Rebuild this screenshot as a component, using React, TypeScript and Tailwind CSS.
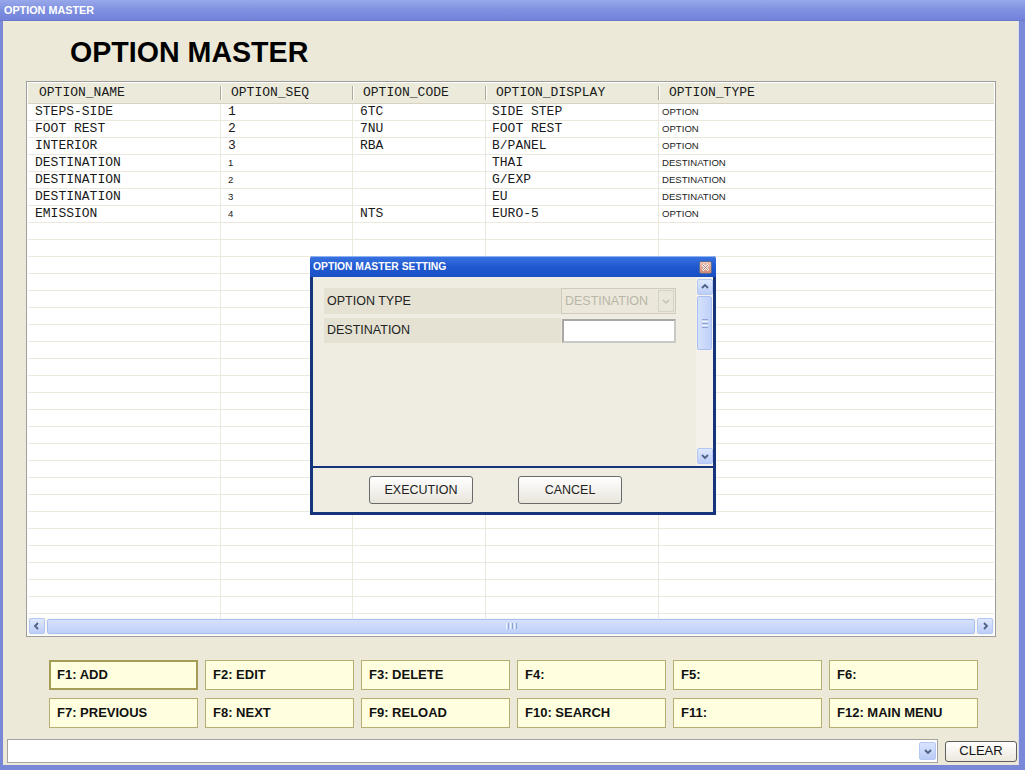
import React from "react";

const rows: [string, string, string, string, string, boolean][] = [
  ["STEPS-SIDE", "1", "6TC", "SIDE STEP", "OPTION", false],
  ["FOOT REST", "2", "7NU", "FOOT REST", "OPTION", false],
  ["INTERIOR", "3", "RBA", "B/PANEL", "OPTION", false],
  ["DESTINATION", "1", "", "THAI", "DESTINATION", true],
  ["DESTINATION", "2", "", "G/EXP", "DESTINATION", true],
  ["DESTINATION", "3", "", "EU", "DESTINATION", true],
  ["EMISSION", "4", "NTS", "EURO-5", "OPTION", true],
];

const mono = "font-['Liberation_Mono','Courier_New',monospace]";
const sans = "font-['Liberation_Sans',Arial,sans-serif]";

function Chevron({ dir }: { dir: "left" | "right" | "up" | "down" }) {
  const d =
    dir === "left"
      ? "M6 2 L3 5 L6 8"
      : dir === "right"
      ? "M4 2 L7 5 L4 8"
      : dir === "up"
      ? "M2 6 L5 3 L8 6"
      : "M2 4 L5 7 L8 4";
  return (
    <svg width="10" height="10" viewBox="0 0 10 10">
      <path d={d} fill="none" stroke="#4d6185" strokeWidth="1.8" />
    </svg>
  );
}

function ScrollBtn({ dir }: { dir: "left" | "right" | "up" | "down" }) {
  return (
    <div className="w-[16px] h-[16px] shrink-0 rounded-[2px] border border-[#b4c8f6] bg-gradient-to-b from-[#dfe8fd] to-[#bccdf8] flex items-center justify-center">
      <Chevron dir={dir} />
    </div>
  );
}

const fkeys = [
  ["F1: ADD", "F2: EDIT", "F3: DELETE", "F4:", "F5:", "F6:"],
  ["F7: PREVIOUS", "F8: NEXT", "F9: RELOAD", "F10: SEARCH", "F11:", "F12: MAIN MENU"],
];

export default function App() {
  const emptyRows = Array.from({ length: 26 });
  const colW = ["w-[193px]", "w-[132px]", "w-[133px]", "w-[173px]", "w-[337px]"];
  const headers = ["OPTION_NAME", "OPTION_SEQ", "OPTION_CODE", "OPTION_DISPLAY", "OPTION_TYPE"];
  return (
    <div className={`relative w-[1025px] h-[770px] overflow-hidden bg-[#7a88d8] flex flex-col ${sans}`}>
      {/* window title bar */}
      <div className="h-[21px] shrink-0 bg-gradient-to-b from-[#98a8ea] via-[#7f90e0] to-[#7282da] flex items-center pl-[4px] border-b border-[#6a78c8]">
        <span className="text-white font-bold text-[10.8px] leading-none">OPTION MASTER</span>
      </div>
      <div className="flex flex-1 pl-[3px] pr-[6px] pb-[5px]">
        <div className="flex-1 bg-[#ece9d8] border-r border-[#d8dcf0] flex flex-col">
          {/* heading */}
          <div className="h-[60px] shrink-0 flex items-center pl-[67px] pt-[3px]">
            <h1 className="text-[28.6px] font-bold text-black leading-none">OPTION MASTER</h1>
          </div>
          {/* table */}
          <div className="ml-[23px] w-[970px] h-[556px] shrink-0 border border-[#9d9d9d] bg-white flex flex-col p-[1px]">
            <div className="h-[21px] shrink-0 flex bg-[#ebeadb] border-b border-[#d6d3c4]">
              {headers.map((h, i) => (
                <div
                  key={h}
                  className={`${colW[i]} shrink-0 flex items-center ${i === 0 ? "pl-[11px]" : "pl-[9px]"} ${mono} text-[13px] text-[#1a1a1a]`}
                >
                  {i > 0 && <div className="h-[14px] w-[1px] bg-[#aca899] -ml-[10px] mr-[9px] border-r border-white box-content" />}
                  {h}
                </div>
              ))}
            </div>
            <div className="flex-1 overflow-hidden flex flex-col">
              {rows.map((r, ri) => (
                <div key={ri} className="h-[17px] shrink-0 flex border-b border-[#ebe9de]">
                  {r.slice(0, 5).map((c, ci) => {
                    const small = ci === 4 || (ci === 1 && r[5]);
                    return (
                      <div
                        key={ci}
                        className={`${colW[ci]} shrink-0 flex items-center ${ci === 4 ? "pl-[3px]" : ci === 3 ? "pl-[6px]" : "pl-[7px]"} ${ci < 4 ? "border-r border-[#ebe9de]" : ""} ${
                          small ? `${sans} text-[9.6px] text-[#222]` : `${mono} text-[13px] text-[#1a1a1a]`
                        }`}
                      >
                        {c as string}
                      </div>
                    );
                  })}
                </div>
              ))}
              {emptyRows.map((_, i) => (
                <div key={"e" + i} className="h-[17px] shrink-0 flex border-b border-[#ebe9de]">
                  {colW.map((w, ci) => (
                    <div key={ci} className={`${w} shrink-0 ${ci < 4 ? "border-r border-[#ebe9de]" : ""}`} />
                  ))}
                </div>
              ))}
            </div>
            {/* horizontal scrollbar */}
            <div className="h-[17px] shrink-0 flex items-center gap-[1px] px-[1px] pb-[1px] bg-[#f7f6f1]">
              <ScrollBtn dir="left" />
              <div className="flex-1 h-[15px] mx-[1px] rounded-[2px] border border-[#a9bff2] bg-gradient-to-b from-[#d5e1fc] to-[#bfd0f8] flex items-center justify-center">
                <div className="flex gap-[1px]">
                  <div className="w-[1px] h-[6px] bg-[#eef3ff]" />
                  <div className="w-[1px] h-[6px] bg-[#8ca4d8]" />
                  <div className="w-[1px] h-[6px] bg-[#eef3ff]" />
                  <div className="w-[1px] h-[6px] bg-[#8ca4d8]" />
                  <div className="w-[1px] h-[6px] bg-[#eef3ff]" />
                  <div className="w-[1px] h-[6px] bg-[#8ca4d8]" />
                </div>
              </div>
              <ScrollBtn dir="right" />
            </div>
          </div>
          {/* function keys */}
          <div className="ml-[46px] mt-[23px] flex flex-col gap-[8px]">
            {fkeys.map((row, ri) => (
              <div key={ri} className="flex gap-[7px]">
                {row.map((k, ki) => (
                  <div
                    key={k}
                    className={`w-[149px] h-[30px] shrink-0 bg-[#ffffdf] flex items-center text-[13px] font-bold text-[#111] ${
                      ri === 0 && ki === 0 ? "border-2 border-[#a59c55] pl-[6px]" : "border border-[#b5ad72] pl-[7px]"
                    }`}
                  >
                    {k}
                  </div>
                ))}
              </div>
            ))}
          </div>
          {/* bottom bar */}
          <div className="mt-[11px] ml-[4px] flex items-center gap-[7px]">
            <div className="w-[931px] h-[24px] bg-white border border-[#a3a3a3] flex justify-end items-center pr-[1px]">
              <div className="w-[17px] h-[18px] rounded-[2px] bg-gradient-to-b from-[#d9e4fd] to-[#b9cbf7] border border-[#b5c8f3] flex items-center justify-center">
                <Chevron dir="down" />
              </div>
            </div>
            <div className="w-[72px] h-[21px] rounded-[3px] border border-[#5f5f5f] bg-gradient-to-b from-white to-[#ece9dd] flex items-center justify-center text-[13px] text-[#111]">
              CLEAR
            </div>
          </div>
        </div>
      </div>

      {/* dialog */}
      <div className="absolute left-[310px] top-[256px] w-[406px] h-[259px] bg-[#16347c] flex flex-col px-[3px] pb-[3px] rounded-t-[3px]">
        <div className="h-[21px] -mx-[3px] shrink-0 bg-gradient-to-b from-[#3872e0] via-[#1f58cf] to-[#1a50c4] rounded-t-[3px] border-t border-[#8fb3f2] flex items-center justify-between pl-[3px] pr-[4px]">
          <span className="text-white font-bold text-[10.3px] leading-none">OPTION MASTER SETTING</span>
          <div className="w-[13px] h-[13px] rounded-[2px] border border-[#5b6d94] bg-gradient-to-b from-[#f0c4b6] to-[#cf8874] flex items-center justify-center">
            <svg width="9" height="9" viewBox="0 0 9 9">
              <path d="M1.5 1.5 L7.5 7.5 M7.5 1.5 L1.5 7.5" stroke="#ffffff" strokeWidth="2" />
              <path d="M1.5 1.5 L7.5 7.5 M7.5 1.5 L1.5 7.5" stroke="#7a3c30" strokeWidth="0.6" />
            </svg>
          </div>
        </div>
        <div className="h-[189px] shrink-0 bg-[#efece2] flex">
          <div className="flex-1 pl-[11px] pt-[11px] flex flex-col gap-[4px]">
            <div className="flex items-center h-[26px] bg-[#e5e2d3] w-[352px]">
              <span className="flex-1 pl-[3px] text-[12.5px] text-[#222]">OPTION TYPE</span>
              <div className="w-[115px] h-[26px] border border-[#cfccbd] bg-[#ebe8db] flex items-center">
                <span className="flex-1 pl-[3px] text-[12.5px] text-[#b9b6a8]">DESTINATION</span>
                <div className="w-[16px] h-[22px] mr-[1px] border border-[#d6d3c6] bg-[#e9e6da] flex items-center justify-center">
                  <svg width="10" height="10" viewBox="0 0 10 10">
                    <path d="M2 4 L5 7 L8 4" fill="none" stroke="#c4c1b3" strokeWidth="1.5" />
                  </svg>
                </div>
              </div>
            </div>
            <div className="flex items-center h-[25px] w-[352px]">
              <span className="w-[237px] h-[25px] flex items-center bg-[#e5e2d3] pl-[3px] text-[12.5px] text-[#222]">DESTINATION</span>
              <div className="w-[114px] h-[24px] ml-[1px] bg-white border-2 border-[#a7a7a3] border-r-[#c9c9c5] border-b-[#c9c9c5]" />
            </div>
          </div>
          {/* vertical scrollbar */}
          <div className="w-[17px] shrink-0 flex flex-col items-center py-[2px] bg-[#f3f1ea]">
            <ScrollBtn dir="up" />
            <div className="w-[15px] h-[54px] mt-[1px] rounded-[2px] border border-[#a9bff2] bg-gradient-to-r from-[#d5e1fc] to-[#bfd0f8] flex flex-col items-center justify-center gap-[1px]">
              <div className="w-[6px] h-[1px] bg-[#8ca4d8]" />
              <div className="w-[6px] h-[1px] bg-[#eef3ff]" />
              <div className="w-[6px] h-[1px] bg-[#8ca4d8]" />
              <div className="w-[6px] h-[1px] bg-[#eef3ff]" />
              <div className="w-[6px] h-[1px] bg-[#8ca4d8]" />
            </div>
            <div className="flex-1" />
            <ScrollBtn dir="down" />
          </div>
        </div>
        <div className="h-[2px] shrink-0 bg-[#16347c]" />
        <div className="flex-1 bg-[#efece2] flex items-center pl-[56px] gap-[45px]">
          <div className="w-[104px] h-[28px] rounded-[3px] border border-[#6a6a6a] bg-gradient-to-b from-white to-[#e8e5da] flex items-center justify-center text-[12.5px] text-[#222]">
            EXECUTION
          </div>
          <div className="w-[104px] h-[28px] rounded-[3px] border border-[#6a6a6a] bg-gradient-to-b from-white to-[#e8e5da] flex items-center justify-center text-[12.5px] text-[#222]">
            CANCEL
          </div>
        </div>
      </div>
    </div>
  );
}
